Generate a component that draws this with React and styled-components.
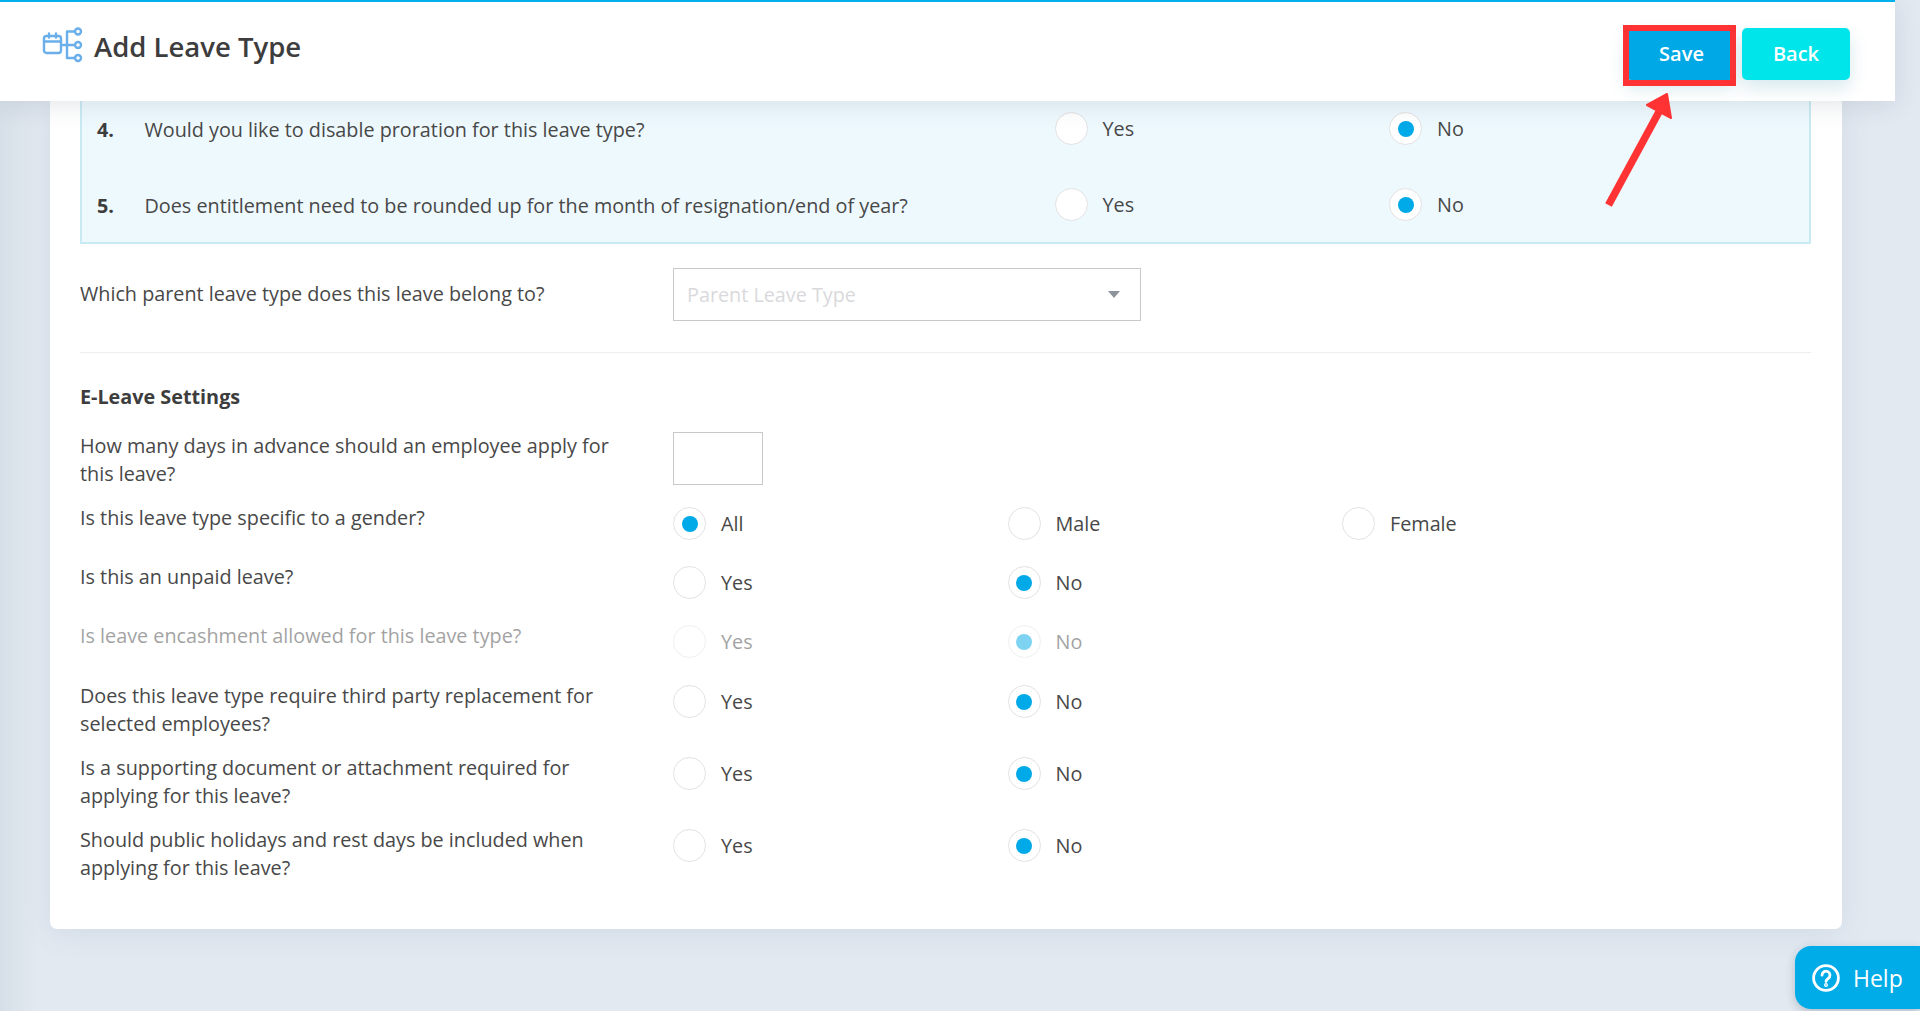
import React from "react";
import styled, { createGlobalStyle } from "styled-components";

const Global = createGlobalStyle`
  html, body { margin: 0; padding: 0; height: 100%; overflow: hidden; }
  body { font-family: "Open Sans", "Noto Sans", sans-serif; color: #484848; background: #e1e7ef; }
  * { box-sizing: border-box; }
`;

const Page = styled.div`
  position: relative;
  width: 1920px;
  height: 1011px;
  overflow: hidden;
  background: linear-gradient(90deg, #d6dfe7 0%, #e2e9f1 2%, #e2e9f1 100%);
`;

const Header = styled.header`
  position: relative;
  z-index: 2;
  width: 1895px;
  height: 101px;
  display: flex;
  justify-content: space-between;
  background: #fff;
  border-top: 2px solid #00b0ea;
  box-shadow: 0 4px 24px rgba(40, 60, 80, 0.12);
  padding: 26px 45px 0 42px;
`;

const TitleGroup = styled.div`
  display: flex;
  align-items: center;
  gap: 10px;
  height: 38px;
`;

const Title = styled.h1`
  margin: 0;
  font-size: 27.5px;
  font-weight: 600;
  color: #3d3d3d;
  line-height: 38px;
`;

const Actions = styled.div`
  display: flex;
  gap: 8px;
  height: 52px;
`;

const ActionButton = styled.button`
  position: relative;
  width: 108px;
  height: 52px;
  padding: 0 0 2px ${(p) => p.$shift || 0}px;
  border: 0;
  border-radius: 5px;
  background: ${(p) => p.$bg};
  color: #fff;
  font-family: inherit;
  font-size: 20px;
  font-weight: 600;
  box-shadow: 0 8px 18px rgba(0, 120, 150, 0.16);
`;

const RedBox = styled.span`
  position: absolute;
  top: -3px;
  left: -3px;
  right: -2px;
  bottom: -6px;
  border: 6px solid #ff3333;
`;

const ArrowSvg = styled.svg`
  position: absolute;
  z-index: 3;
  left: 1600px;
  top: 90px;
`;

const Card = styled.main`
  width: 1792px;
  height: 828px;
  margin-left: 50px;
  padding: 0 31px 0 30px;
  background: #fff;
  border-radius: 0 0 7px 7px;
  box-shadow: 0 4px 30px rgba(70, 100, 130, 0.1);
`;

const Panel = styled.section`
  height: 143px;
  padding-top: 13px;
  background: #eef9fe;
  border: solid #c9eaf3;
  border-width: 0 2px 2px 2px;
  display: flex;
  flex-direction: column;
  gap: 48px;
`;

const PanelRow = styled.div`
  display: grid;
  grid-template-columns: 47.5px 910px 334.5px 334.5px;
  height: 28px;
  padding-left: 15px;
  align-items: center;
  font-size: 19.8px;
  line-height: 28px;
`;

const Num = styled.b`
  font-weight: 700;
  color: #3d3d3d;
`;

const Cell = styled.span``;

const SelectRow = styled.div`
  display: grid;
  grid-template-columns: 593px 468px;
  align-items: center;
  margin-top: 24px;
  font-size: 19.8px;
  padding-bottom: 31px;
  border-bottom: 1px solid #eeeeee;
`;

const SelectBox = styled.div`
  height: 53px;
  border: 1.5px solid #c9c9c9;
  display: flex;
  align-items: center;
  justify-content: space-between;
  padding: 0 20px 0 13px;
  color: #d9d9dc;
  font-size: 19.8px;
`;

const SelectLabel = styled.div`
  margin-top: -3px;
`;

const Caret = styled.span`
  width: 0;
  height: 0;
  border-left: 6px solid transparent;
  border-right: 6px solid transparent;
  border-top: 7px solid #8d949b;
`;

const SectionTitle = styled.h2`
  margin: 30px 0 21px;
  font-size: 19.8px;
  line-height: 28px;
  font-weight: 700;
  color: #3d3d3d;
`;

const Row = styled.div`
  display: grid;
  grid-template-columns: 593px 334.5px 334.5px 334.5px;
  min-height: ${(p) => p.$h}px;
  font-size: 19.8px;
  line-height: 28px;
  opacity: ${(p) => (p.$disabled ? 0.5 : 1)};
`;

const Label = styled.div`
  width: 550px;
  padding-top: ${(p) => p.$top ?? 1}px;
`;

const NumberInput = styled.div`
  width: 90px;
  height: 53px;
  border: 1.5px solid #c9c9c9;
`;

const Option = styled.label`
  display: flex;
  align-items: center;
  gap: 15px;
  height: 33px;
  margin-top: 4px;
`;

const PanelOption = styled(Option)`
  margin-top: -2px;
  align-self: center;
`;

const RadioDot = styled.span`
  flex: none;
  width: 33px;
  height: 33px;
  border-radius: 50%;
  border: 1.5px solid #e2e2e2;
  background: #fff;
  display: flex;
  align-items: center;
  justify-content: center;
  &::after {
    content: "";
    width: 16px;
    height: 16px;
    border-radius: 50%;
    background: ${(p) => (p.$on ? "#00a9e8" : "transparent")};
  }
`;

const HelpButton = styled.div`
  position: absolute;
  z-index: 3;
  left: 1795px;
  top: 946px;
  width: 125px;
  height: 63px;
  display: flex;
  align-items: center;
  gap: 13px;
  padding-left: 17px;
  background: #00ace8;
  color: #fff;
  border-radius: 16px 0 0 16px;
  font-size: 23px;
  box-shadow: 0 3px 10px rgba(40, 60, 80, 0.25);
`;

const Radio = ({ on, label, as: Wrap = Option }) => (
  <Wrap>
    <RadioDot $on={on} />
    {label}
  </Wrap>
);

const IconSvg = styled.svg`
  overflow: visible;
  flex: none;
`;

const LeaveIcon = () => (
  <IconSvg width="42" height="36" viewBox="0 0 42 36" fill="none" stroke="#6aaeea" strokeWidth="2.4" strokeLinecap="round" strokeLinejoin="round">
    <rect x="2" y="7" width="17" height="17" rx="2.5" />
    <path d="M2 12.5h17M7 4.5v4M14 4.5v4" />
    <path d="M25 2.5v26.5M25 2.5h8M21 16h12M25 29h8" />
    <circle cx="36" cy="2.5" r="3" />
    <circle cx="36" cy="16" r="3" />
    <circle cx="36" cy="29" r="3" />
  </IconSvg>
);

const panelRows = [
  { n: "4.", q: "Would you like to disable proration for this leave type?" },
  { n: "5.", q: "Does entitlement need to be rounded up for the month of resignation/end of year?" },
];

const yesNo = [
  { q: "Is this an unpaid leave?", h: 59 },
  { q: "Is leave encashment allowed for this leave type?", h: 60, disabled: true },
  { q: "Does this leave type require third party replacement for selected employees?", h: 72 },
  { q: "Is a supporting document or attachment required for applying for this leave?", h: 72 },
  { q: "Should public holidays and rest days be included when applying for this leave?", h: 72 },
];

export default function App() {
  return (
    <Page>
      <Global />
      <Header>
        <TitleGroup>
          <LeaveIcon />
          <Title>Add Leave Type</Title>
        </TitleGroup>
        <Actions>
          <ActionButton $bg="#00a9e6" $shift={3}>
            Save
            <RedBox />
          </ActionButton>
          <ActionButton $bg="#00e5e9">Back</ActionButton>
        </Actions>
      </Header>
      <ArrowSvg width="80" height="122" viewBox="0 0 80 122">
        <path d="M8.5 115L60 20" stroke="#ff3333" strokeWidth="7.5" fill="none" />
        <path d="M67 4L47 15L71 28Z" fill="#ff3333" stroke="#ff3333" strokeWidth="2" strokeLinejoin="round" />
      </ArrowSvg>
      <Card>
        <Panel>
          {panelRows.map((r) => (
            <PanelRow key={r.n}>
              <Num>{r.n}</Num>
              <Cell>{r.q}</Cell>
              <Radio as={PanelOption} label="Yes" />
              <Radio as={PanelOption} on label="No" />
            </PanelRow>
          ))}
        </Panel>
        <SelectRow>
          <SelectLabel>Which parent leave type does this leave belong to?</SelectLabel>
          <SelectBox>
            Parent Leave Type
            <Caret />
          </SelectBox>
        </SelectRow>
        <SectionTitle>E-Leave Settings</SectionTitle>
        <Row $h={71}>
          <Label $top={0}>How many days in advance should an employee apply for this leave?</Label>
          <NumberInput />
        </Row>
        <Row $h={59}>
          <Label>Is this leave type specific to a gender?</Label>
          <Radio on label="All" />
          <Radio label="Male" />
          <Radio label="Female" />
        </Row>
        {yesNo.map((r) => (
          <Row key={r.q} $h={r.h} $disabled={r.disabled}>
            <Label>{r.q}</Label>
            <Radio label="Yes" />
            <Radio on label="No" />
          </Row>
        ))}
      </Card>
      <HelpButton>
        <svg width="28" height="28" viewBox="0 0 28 28" fill="none" stroke="#fff" strokeWidth="2.8" strokeLinecap="round">
          <circle cx="14" cy="14" r="12.4" />
          <path d="M10 11.2a4 4 0 1 1 6.2 3.3c-1.4.9-2.2 1.6-2.2 2.9" />
          <circle cx="14" cy="21" r=".6" fill="#fff" />
        </svg>
        Help
      </HelpButton>
    </Page>
  );
}
